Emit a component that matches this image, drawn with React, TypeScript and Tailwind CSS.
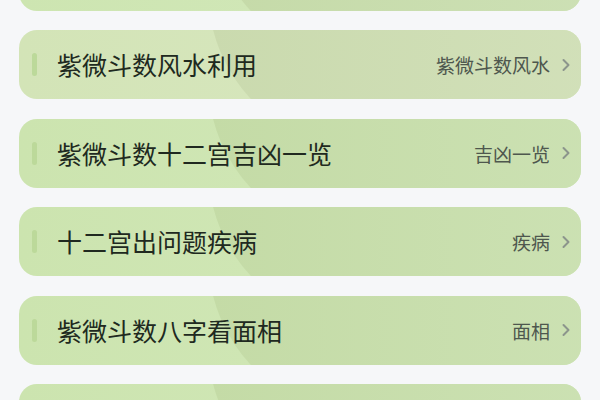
import { ChevronRight } from 'lucide-react'

// 列表卡片：左侧标题 + 右侧标签
const items = [
  {
    title: '紫微斗数命宫详解',
    tag: '命宫',
    bg: 'bg-gradient-to-r from-[#cde5b1] to-[#d4e9bd]',
    blob: 'bg-gradient-to-r from-[#c5daa8] to-[#d3e5bf]',
  },
  {
    title: '紫微斗数风水利用',
    tag: '紫微斗数风水',
    bg: 'bg-gradient-to-r from-[#d3e4b7] to-[#d9e8c1]',
    blob: 'bg-gradient-to-r from-[#cadaae] to-[#d8e5c2]',
  },
  {
    title: '紫微斗数十二宫吉凶一览',
    tag: '吉凶一览',
    bg: 'bg-gradient-to-r from-[#cce4af] to-[#d3e9bb]',
    blob: 'bg-gradient-to-r from-[#c4dba6] to-[#d2e6bd]',
  },
  {
    title: '十二宫出问题疾病',
    tag: '疾病',
    bg: 'bg-gradient-to-r from-[#cce4af] to-[#d3e9bb]',
    blob: 'bg-gradient-to-r from-[#c4dba6] to-[#d2e6bd]',
  },
  {
    title: '紫微斗数八字看面相',
    tag: '面相',
    bg: 'bg-gradient-to-r from-[#cce4af] to-[#d3e9bb]',
    blob: 'bg-gradient-to-r from-[#c4dba6] to-[#d2e6bd]',
  },
  {
    title: '紫微斗数流年运势',
    tag: '流年',
    bg: 'bg-gradient-to-r from-[#cce4af] to-[#d3e9bb]',
    blob: 'bg-gradient-to-r from-[#c4dba6] to-[#d2e6bd]',
  },
]

export default function App() {
  return (
    <div
      className="w-[600px] h-[400px] overflow-hidden bg-[#f6f7f9]"
      style={{ fontFamily: '"Noto Sans CJK SC", "Noto Sans", sans-serif' }}
    >
      <div className="-mt-[58.5px] flex flex-col gap-[19.5px] px-[19px]">
        {items.map((it) => (
          <div
            key={it.title}
            className={`relative h-[69px] rounded-[18px] overflow-hidden ${it.bg}`}
          >
            {/* 右侧弧形色块 */}
            <div
              className={`absolute left-[189px] top-[-200px] w-[700px] h-[320px] rounded-l-[160px] ${it.blob}`}
            />
            <div className="relative h-full flex items-center pl-[13px] pr-[5px]">
              <div className="w-[5px] h-[23px] rounded-full bg-[#bcd99a]" />
              <div className="ml-[20px] text-[25px] leading-none text-[#202920]">
                {it.title}
              </div>
              <div className="ml-auto text-[19px] leading-none text-[#4e574e]">
                {it.tag}
              </div>
              <ChevronRight
                className="ml-[6px] text-[#8c958c]"
                size={20}
                strokeWidth={2.4}
              />
            </div>
          </div>
        ))}
      </div>
    </div>
  )
}
